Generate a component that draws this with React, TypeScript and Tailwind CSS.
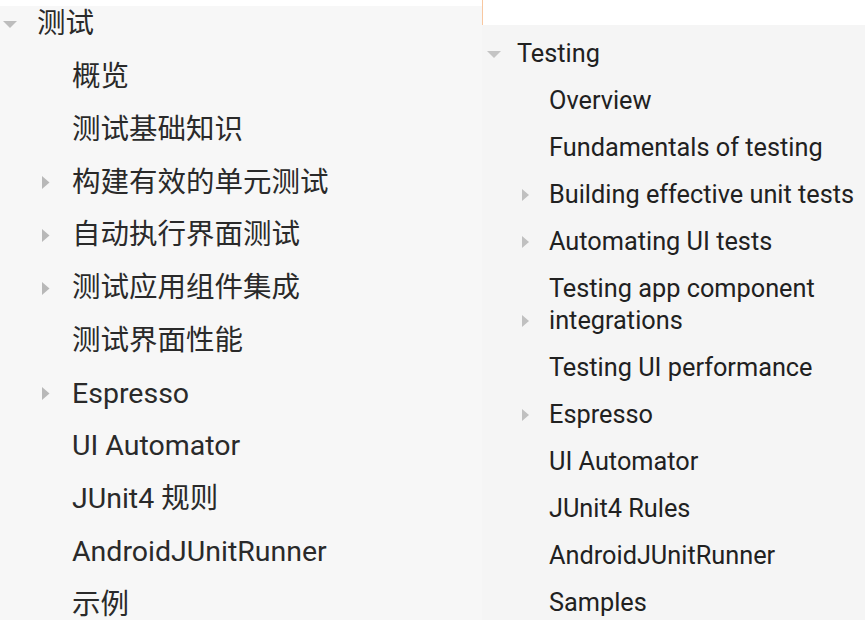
import React from "react";

type Item = { label: React.ReactNode; arrow?: boolean; wrap?: boolean };

const DownTri = ({ c = "#bdbdbd" }: { c?: string }) => (
  <svg width="14" height="7" viewBox="0 0 14 7">
    <path d="M0 0 L14 0 L7 7 Z" fill={c} />
  </svg>
);

const RightTri = ({ c = "#b8b8b8", h = 12 }: { c?: string; h?: number }) => (
  <svg width={h / 2 + 1} height={h} viewBox="0 0 7 12">
    <path d="M0 0 L7 6 L0 12 Z" fill={c} />
  </svg>
);

const zh: Item[] = [
  { label: "概览" },
  { label: "测试基础知识" },
  { label: "构建有效的单元测试", arrow: true },
  { label: "自动执行界面测试", arrow: true },
  { label: "测试应用组件集成", arrow: true },
  { label: "测试界面性能" },
  { label: "Espresso", arrow: true },
  { label: "UI Automator" },
  { label: "JUnit4 规则" },
  { label: "AndroidJUnitRunner" },
  { label: "示例" },
];

const en: Item[] = [
  { label: "Overview" },
  { label: "Fundamentals of testing" },
  { label: "Building effective unit tests", arrow: true },
  { label: "Automating UI tests", arrow: true },
  {
    label: (
      <>
        Testing app component
        <br />
        integrations
      </>
    ),
    arrow: true,
    wrap: true,
  },
  { label: "Testing UI performance" },
  { label: "Espresso", arrow: true },
  { label: "UI Automator" },
  { label: "JUnit4 Rules" },
  { label: "AndroidJUnitRunner" },
  { label: "Samples" },
];

export default function App() {
  return (
    <div className="flex w-[865px] h-[620px] overflow-hidden bg-white">
      {/* Left: Chinese */}
      <div className="flex flex-col w-[482px] h-full">
        <div className="h-[6px] bg-white shrink-0" />
        <div
          className="flex-1 bg-[#f7f7f7] pt-[2px] text-[#2a2a2a] text-[28.5px] leading-[36px] whitespace-nowrap"
          style={{ fontFamily: 'Roboto, "Noto Sans CJK SC", sans-serif' }}
        >
          <div className="flex items-center h-[32px] mb-[10.6px] pl-[3px]">
            <div className="w-[34px] flex items-center">
              <DownTri />
            </div>
            <span>测试</span>
          </div>
          {zh.map((it, i) => (
            <div key={i} className="flex items-center py-[8.4px] pl-[42px]">
              <div className="w-[30px] flex items-center">
                {it.arrow ? <RightTri h={13} /> : null}
              </div>
              <span>{it.label}</span>
            </div>
          ))}
        </div>
      </div>

      {/* Divider */}
      <div className="flex flex-col w-px h-full">
        <div className="h-[25px] bg-[#f8c7a0] shrink-0" />
        <div className="flex-1 bg-[#f5f5f5]" />
      </div>

      {/* Right: English */}
      <div className="flex flex-col flex-1 h-full">
        <div className="h-[25px] bg-white shrink-0" />
        <div
          className="flex-1 bg-[#f5f5f5] text-[#212121] text-[25.3px] leading-[32px] whitespace-nowrap"
          style={{ fontFamily: 'Roboto, "Noto Sans", sans-serif' }}
        >
          <div className="flex items-center pt-[13px] pb-[7.5px] pl-[4px]">
            <div className="w-[30px] flex items-center">
              <DownTri c="#c4c4c4" />
            </div>
            <span>Testing</span>
          </div>
          {en.map((it, i) => (
            <div
              key={i}
              className={
                it.wrap
                  ? "flex items-end py-[7.5px] pl-[39px]"
                  : "flex items-center py-[7.5px] pl-[39px]"
              }
            >
              <div className="w-[27px] h-[32px] flex items-center">
                {it.arrow ? <RightTri c="#c0c0c0" /> : null}
              </div>
              <span>{it.label}</span>
            </div>
          ))}
        </div>
      </div>
    </div>
  );
}
